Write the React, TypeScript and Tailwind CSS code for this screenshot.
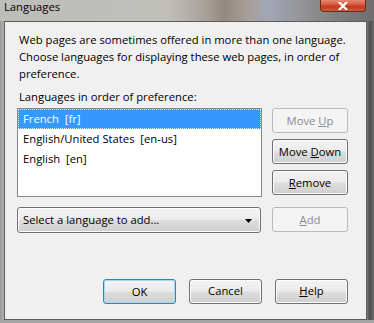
import React from 'react';

const font = "font-['Open_Sans',sans-serif] text-[11.25px]";

function Btn({ children, disabled, primary }: { children: React.ReactNode; disabled?: boolean; primary?: boolean }) {
  const base = 'flex items-center justify-center rounded-[3px] border leading-[15px] select-none whitespace-pre';
  if (disabled) {
    return (
      <div className={`${base} w-[76px] h-[25px] border-[#b7bbbe] bg-[#f4f4f4] text-[#8b8b8b]`}>
        <span>{children}</span>
      </div>
    );
  }
  return (
    <div
      className={`${base} h-[25px] text-black bg-[linear-gradient(#f3f3f3_0%,#ebebeb_48%,#dddddd_52%,#cfcfcf_100%)] ${
        primary
          ? 'w-[73px] border-[#3c7fb1] shadow-[inset_0_0_0_1px_#9fdcf6]'
          : 'w-[76px] border-[#707070] shadow-[inset_0_0_0_1px_#fbfbfb]'
      }`}
    >
      <span>{children}</span>
    </div>
  );
}

function SmallBtn({ children }: { children: React.ReactNode }) {
  return (
    <div className="flex items-center justify-center w-[73px] h-[25px] rounded-[3px] border border-[#707070] shadow-[inset_0_0_0_1px_#fbfbfb] bg-[linear-gradient(#f3f3f3_0%,#ebebeb_48%,#dddddd_52%,#cfcfcf_100%)] text-black">
      <span>{children}</span>
    </div>
  );
}

export default function App() {
  const languages = ['French  [fr]', 'English/United States  [en-us]', 'English  [en]'];

  return (
    <div className={`w-[374px] h-[323px] flex flex-col overflow-hidden ${font} bg-[linear-gradient(90deg,#bdbdb9_0%,#c0bfba_45%,#a8a19a_55%,#938882_60%,#a89e98_66%,#a2a7b5_72%,#959599_80%,#858382_88%,#6e6c6c_100%)]`}>
      {/* Title bar */}
      <div className="h-[21px] flex items-start justify-between shrink-0">
        <span className="pl-[4px] leading-[14px] text-black whitespace-pre">Languages</span>
        <div className="mr-[8px] w-[46px] h-[12px] rounded-b-[4px] border border-t-0 border-[#6e2a1c] bg-[linear-gradient(#e68a72_0%,#d5563c_45%,#c23a1e_55%,#d0583a_100%)] flex items-center justify-center">
          <svg width="10" height="8" viewBox="0 0 10 8">
            <path d="M1.5 0.5 L8.5 7.5 M8.5 0.5 L1.5 7.5" stroke="#fff" strokeWidth="2.2" strokeLinecap="square" />
          </svg>
        </div>
      </div>

      {/* Body */}
      <div className="flex h-[299px] shrink-0">
        <div className="w-[4px] bg-[linear-gradient(90deg,#9a9a9a,#b0b0b0)]" />
        <div className="w-[363px] border border-[#5c5c5c] bg-[#f0f0f0] flex flex-col pl-[12px] pr-[18px] pt-[9px] text-black">
          <p className="pl-[2px] leading-[17px]">
            Web pages are sometimes offered in more than one language.
            <br />
            Choose languages for displaying these web pages, in order of
            <br />
            preference.
          </p>
          <p className="pl-[2px] mt-[6px] leading-[17px]">Languages in order of preference:</p>

          <div className="flex gap-[10px] mt-[3px]">
            <div className="w-[245px] h-[89px] border border-[#828790] bg-white">
              {languages.map((l, i) => (
                <div
                  key={l}
                  className={`h-[20px] leading-[20px] pl-[5px] whitespace-pre ${
                    i === 0 ? 'bg-[#3399ff] text-white h-[19px] leading-[19px] outline-1 outline-dotted outline-[#e8e8e8] -outline-offset-1' : 'text-black'
                  }`}
                >
                  {l}
                </div>
              ))}
            </div>
            <div className="flex flex-col gap-[6px]">
              <Btn disabled>
                Move <span className="underline">U</span>p
              </Btn>
              <Btn>
                Move <span className="underline">D</span>own
              </Btn>
              <Btn>
                <span className="underline">R</span>emove
              </Btn>
            </div>
          </div>

          <div className="flex gap-[11px] mt-[10px] items-start">
            <div className="w-[244px] h-[26px] rounded-[3px] border border-[#707070] shadow-[inset_0_0_0_1px_#fbfbfb] bg-[linear-gradient(#f3f3f3_0%,#ebebeb_48%,#dddddd_52%,#cfcfcf_100%)] flex items-center justify-between pl-[5px] pr-[8px] pt-[1px]">
              <span>Select a language to add...</span>
              <svg width="7" height="4" viewBox="0 0 7 4">
                <path d="M0 0 H7 L3.5 4 Z" fill="#000" />
              </svg>
            </div>
            <Btn disabled>
              <span className="underline">A</span>dd
            </Btn>
          </div>

          <div className="flex justify-end gap-[13px] mt-[46px]">
            <Btn primary>OK</Btn>
            <SmallBtn>Cancel</SmallBtn>
            <SmallBtn>
              <span className="underline">H</span>elp
            </SmallBtn>
          </div>
        </div>
        <div className="flex-1 bg-[linear-gradient(90deg,#7a7a7a,#4e4e4e_40%,#6c6c6c)]" />
      </div>
      <div className="flex-1 bg-[#a4a4a4]" />
    </div>
  );
}
